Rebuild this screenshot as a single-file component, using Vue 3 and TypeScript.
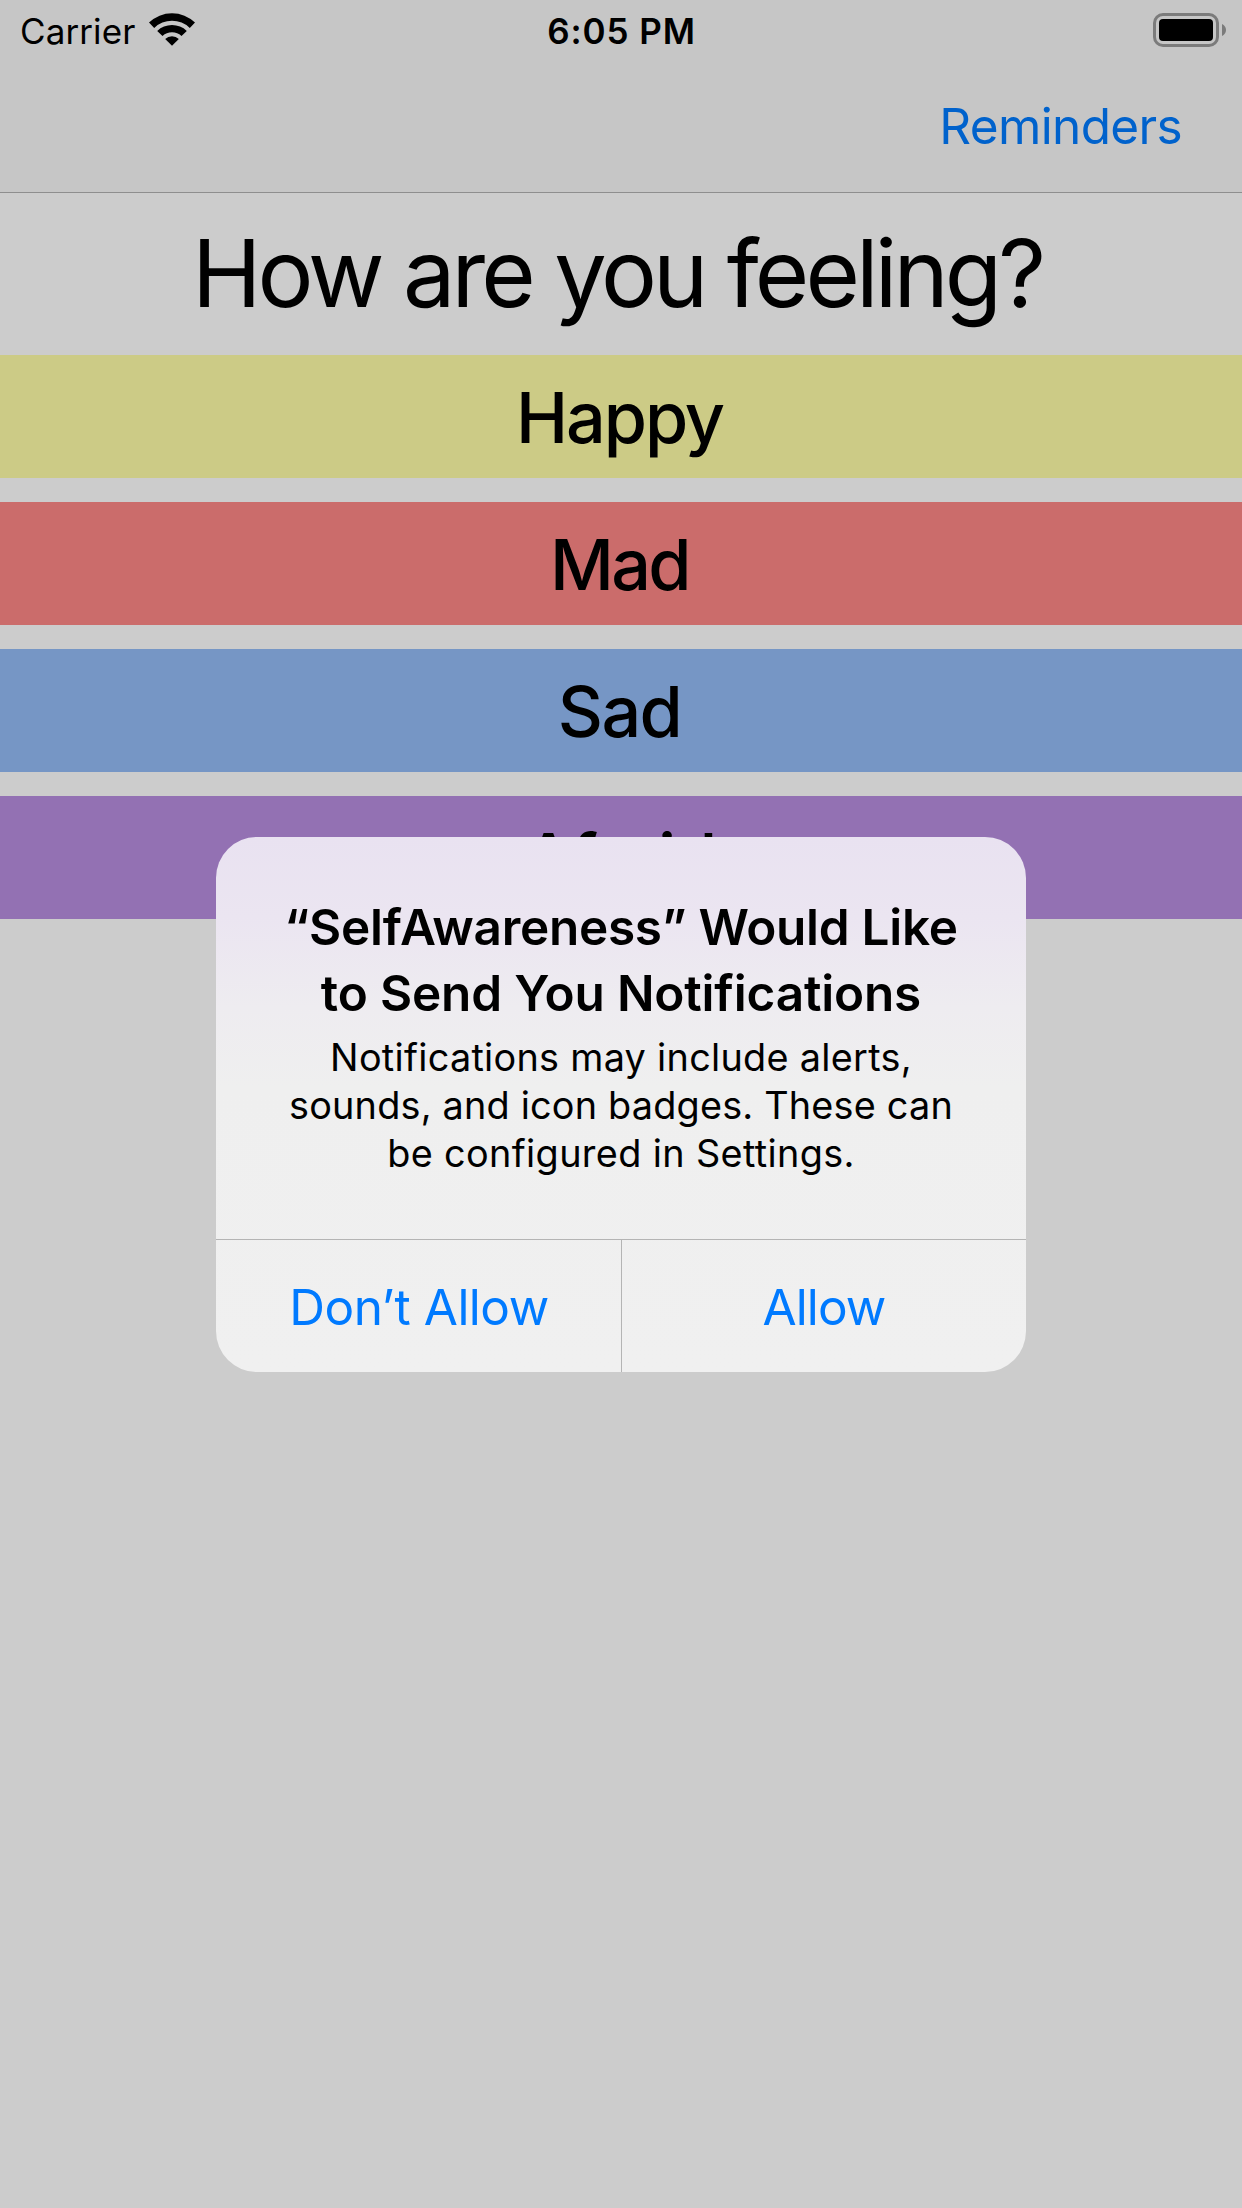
<script setup lang="ts">
interface Feeling {
  label: string
  tone: string
}

const feelings: Feeling[] = [
  { label: 'Happy', tone: 'happy' },
  { label: 'Mad', tone: 'mad' },
  { label: 'Sad', tone: 'sad' },
  { label: 'Afraid', tone: 'afraid' },
]

const alertTitle: string[] = ['“SelfAwareness” Would Like', 'to Send You Notifications']
const alertMessage: string[] = [
  'Notifications may include alerts,',
  'sounds, and icon badges. These can',
  'be configured in Settings.',
]
</script>

<template>
  <div class="screen">
    <header class="top">
      <div class="status">
        <div class="carrier">
          <span>Carrier</span>
          <svg class="wifi" width="46" height="33" viewBox="0 0 46 33">
            <path d="M0 9.6 A33 33 0 0 1 46 9.6 L40.8 14.9 A25.6 25.6 0 0 0 5.2 14.9 Z" />
            <path d="M8.2 17.9 A21.4 21.4 0 0 1 37.8 17.9 L32.5 23.1 A13.9 13.9 0 0 0 13.5 23.1 Z" />
            <path d="M16.2 26 A9.9 9.9 0 0 1 29.8 26 L23 32.8 Z" />
          </svg>
        </div>
        <div class="time">6:05 PM</div>
        <div class="power">
          <svg width="74" height="34" viewBox="0 0 74 34">
            <rect x="1.5" y="1.5" width="63" height="31" rx="8.5" fill="none" stroke="#7b7b7b" stroke-width="3" />
            <rect x="6" y="6" width="54" height="22" rx="4" fill="#000" />
            <path d="M69 11 C71.4 12 73 14.4 73 17 C73 19.6 71.4 22 69 23 Z" fill="#7b7b7b" />
          </svg>
        </div>
      </div>
      <nav class="nav"><a class="reminders">Reminders</a></nav>
    </header>

    <main>
      <h1 class="question"><span>How are you feeling?</span></h1>
      <div class="feelings">
        <button v-for="f in feelings" :key="f.tone" class="feeling" :class="f.tone">
          <span>{{ f.label }}</span>
        </button>
      </div>
    </main>

    <section class="alert" role="alertdialog">
      <div class="body">
        <h2 class="title">
          <span v-for="(line, i) in alertTitle" :key="line" :class="'t' + i">{{ line }}</span>
        </h2>
        <p class="message">
          <span v-for="(line, i) in alertMessage" :key="line" :class="'m' + i">{{ line }}</span>
        </p>
      </div>
      <div class="actions">
        <button class="action"><span>Don’t Allow</span></button>
        <button class="action"><span>Allow</span></button>
      </div>
    </section>
  </div>
</template>

<style>
body {
  margin: 0;
  background: #ccc;
}
</style>

<style scoped>
.screen {
  position: relative;
  width: 1242px;
  height: 2208px;
  overflow: hidden;
  background: #ccc;
  color: #000;
  font-family: Inter, 'Liberation Sans', sans-serif;
}
button {
  border: 0;
  padding: 0;
  margin: 0;
  font: inherit;
  color: inherit;
  background: none;
}
h1, h2, p {
  margin: 0;
}
.top {
  box-sizing: border-box;
  height: 193px;
  background: #c6c6c6;
  border-bottom: 1px solid #8e8e8e;
}
.status {
  box-sizing: border-box;
  height: 60px;
  padding: 2px 15px 0 20px;
  display: grid;
  grid-template-columns: 1fr auto 1fr;
  align-items: center;
  font-size: 35px;
  line-height: 58px;
}
.carrier {
  display: flex;
  align-items: center;
  gap: 14px;
  letter-spacing: 0.1px;
}
.wifi {
  margin-top: -3px;
}
.time {
  font-weight: 600;
  letter-spacing: 0.9px;
  margin-right: 4px;
}
.power {
  display: flex;
  justify-content: flex-end;
  margin-top: -2px;
}
.nav {
  height: 132px;
  display: flex;
  align-items: center;
  justify-content: flex-end;
  padding-right: 60px;
}
.reminders {
  color: #0062cc;
  font-size: 49.5px;
  letter-spacing: -0.65px;
}
.question {
  height: 160px;
  margin-bottom: 2px;
  padding-right: 8px;
  display: flex;
  align-items: center;
  justify-content: center;
  font-size: 93.5px;
  font-weight: 400;
  letter-spacing: -3.92px;
  white-space: nowrap;
}
.feelings {
  display: flex;
  flex-direction: column;
  gap: 24px;
}
.feeling {
  box-sizing: border-box;
  height: 123px;
  padding: 2px 3px 0 0;
  font-size: 70px;
  font-weight: 500;
  text-align: center;
}
.happy { background: #cccb86; letter-spacing: -2.1px; }
.mad { background: #cb6c6b; letter-spacing: -2.6px; }
.sad { background: #7696c5; letter-spacing: -1.6px; }
.afraid { background: #9371b3; letter-spacing: -2px; }
.alert {
  position: absolute;
  left: 216px;
  top: 837px;
  width: 810px;
  height: 535px;
  border-radius: 41px;
  overflow: hidden;
  display: flex;
  flex-direction: column;
  background: linear-gradient(180deg, #e9e2f1 0, #ebe5f1 80px, #eeecf0 170px, #efefef 250px, #f0f0f0 100%);
}
.body {
  flex: 1;
  display: flex;
  flex-direction: column;
  align-items: center;
  gap: 7px;
  padding-top: 57px;
}
.title, .message {
  display: flex;
  flex-direction: column;
  align-items: center;
  white-space: nowrap;
}
.title {
  font-size: 49.5px;
  line-height: 66px;
  font-weight: 600;
}
.t0 { letter-spacing: -0.28px; }
.t1 { letter-spacing: -0.17px; }
.message {
  font-size: 37.8px;
  line-height: 48px;
}
.m0 { letter-spacing: 0.29px; }
.m1 { letter-spacing: 0.2px; }
.m2 { letter-spacing: 0.36px; }
.actions {
  height: 132px;
  display: flex;
  border-top: 1px solid #b4b4b4;
}
.action {
  flex: 1;
  padding: 1px 0 0 1px;
  color: #007aff;
  font-size: 49.5px;
  letter-spacing: -0.5px;
}
.action + .action {
  padding-left: 0;
  border-left: 1px solid #b4b4b4;
  letter-spacing: -0.9px;
}
</style>
